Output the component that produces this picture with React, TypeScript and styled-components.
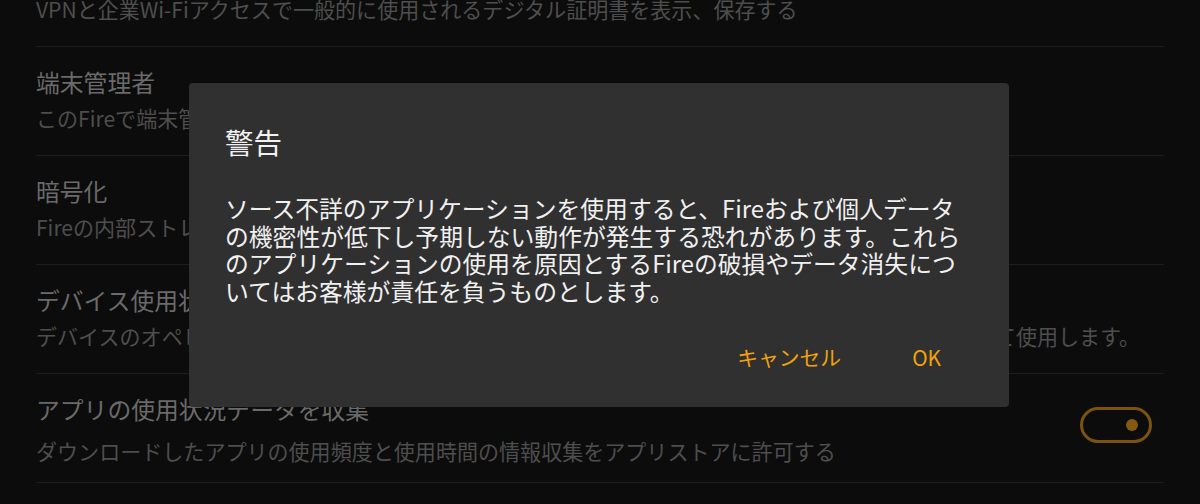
import styled, { createGlobalStyle } from 'styled-components';

interface ISettingItem {
  id: string;
  title: string;
  summary: string;
  toggle?: boolean;
  loose?: boolean;
}

const GlobalStyle = createGlobalStyle`
  html, body {
    margin: 0;
    padding: 0;
    background: #0c0c0c;
    overflow: hidden;
  }
  body {
    font-family: "Noto Sans CJK JP", "Noto Sans", sans-serif;
  }
`

const Screen = styled.div`
  position: relative;
  width: 1200px;
  height: 504px;
  overflow: hidden;
  background: #0c0c0c;
`

const SettingList = styled.ul`
  margin: -62px 36px 0;
  padding: 0;
  list-style: none;
`

const SettingRow = styled.li`
  display: flex;
  flex-direction: row;
  align-items: center;
  height: 108px;
  border-bottom: 1px solid #1d1d1d;
`

const SettingText = styled.div`
  display: flex;
  flex-direction: column;
  align-self: flex-start;
  flex: 1;
  padding-top: 20px;
  white-space: nowrap;
`

const SettingTitle = styled.div`
  font-size: 23.8px;
  line-height: 30px;
  color: #6a6a6a;
`

const SettingSummary = styled.div<{ $loose?: boolean }>`
  margin-top: ${props => props.$loose ? '13px' : '7px'};
  font-size: 21.05px;
  line-height: 28px;
  color: #4e4e4e;
`

const Toggle = styled.div`
  position: relative;
  box-sizing: border-box;
  width: 72px;
  height: 36px;
  margin: 0 12px 6px 0;
  border: 3.5px solid #7b530f;
  border-radius: 18px;
`

const ToggleKnob = styled.div`
  position: absolute;
  right: 11px;
  top: 50%;
  width: 12px;
  height: 12px;
  margin-top: -6px;
  border-radius: 50%;
  background: #85590f;
`

const Dialog = styled.div`
  position: absolute;
  top: 83px;
  left: 189px;
  box-sizing: border-box;
  width: 820px;
  height: 324px;
  padding-top: 42px;
  background: #303030;
  border-radius: 4px;
  display: flex;
  flex-direction: column;
`

const DialogTitle = styled.h2`
  margin: 0;
  padding: 0 36px;
  font-size: 28.5px;
  font-weight: 400;
  line-height: 34px;
  color: #f2f2f2;
`

const DialogBody = styled.div`
  margin-top: 35px;
  padding: 0 36px;
  font-size: 23.8px;
  line-height: 27.5px;
  color: #f0f0f0;
`

const BodyLine = styled.div`
  white-space: nowrap;
`

const ButtonRow = styled.div`
  display: flex;
  flex-direction: row;
  justify-content: flex-end;
  gap: 71px;
  margin-top: 29px;
  padding-right: 68px;
`

const DialogButton = styled.button`
  height: 48px;
  padding: 0;
  border: none;
  background: none;
  font-family: "Noto Sans CJK JP", "Noto Sans", sans-serif;
  font-size: 20.8px;
  color: #f0a20c;
  cursor: pointer;
`

const settings: ISettingItem[] = [
  {
    id: 'cert',
    title: '証明書を表示',
    summary: 'VPNと企業Wi-Fiアクセスで一般的に使用されるデジタル証明書を表示、保存する',
  },
  {
    id: 'admin',
    title: '端末管理者',
    summary: 'このFireで端末管理者を表示または無効にする',
  },
  {
    id: 'encrypt',
    title: '暗号化',
    summary: 'Fireの内部ストレージを暗号化する',
  },
  {
    id: 'device-usage',
    title: 'デバイス使用状況データを収集',
    summary: 'デバイスのオペレーティングシステムに関する情報を収集して、Fireの機能とサービスの改善に役立てて使用します。',
  },
  {
    id: 'app-usage',
    title: 'アプリの使用状況データを収集',
    summary: 'ダウンロードしたアプリの使用頻度と使用時間の情報収集をアプリストアに許可する',
    toggle: true,
    loose: true,
  },
];

const warningLines = [
  'ソース不詳のアプリケーションを使用すると、Fireおよび個人データ',
  'の機密性が低下し予期しない動作が発生する恐れがあります。これら',
  'のアプリケーションの使用を原因とするFireの破損やデータ消失につ',
  'いてはお客様が責任を負うものとします。',
];

export default function App() {
  return (
    <Screen>
      <GlobalStyle />
      <SettingList>
        {settings.map((item: ISettingItem) => (
          <SettingRow key={item.id}>
            <SettingText>
              <SettingTitle>{item.title}</SettingTitle>
              <SettingSummary $loose={item.loose}>{item.summary}</SettingSummary>
            </SettingText>
            {item.toggle && (
              <Toggle>
                <ToggleKnob />
              </Toggle>
            )}
          </SettingRow>
        ))}
      </SettingList>
      <Dialog>
        <DialogTitle>警告</DialogTitle>
        <DialogBody>
          {warningLines.map((line: string) => (
            <BodyLine key={line}>{line}</BodyLine>
          ))}
        </DialogBody>
        <ButtonRow>
          <DialogButton>キャンセル</DialogButton>
          <DialogButton>OK</DialogButton>
        </ButtonRow>
      </Dialog>
    </Screen>
  );
}
